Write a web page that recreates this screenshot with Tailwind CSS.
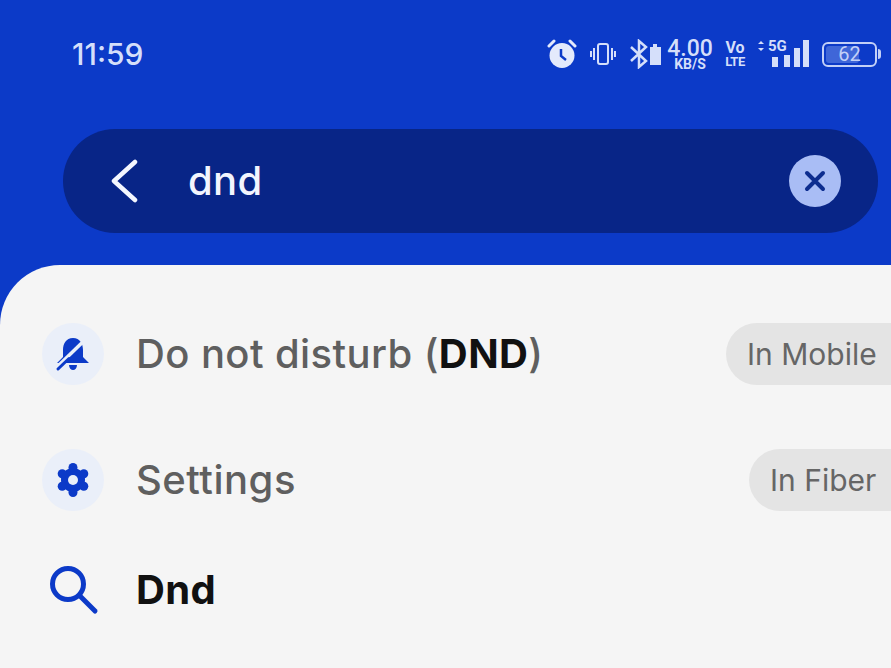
<!DOCTYPE html>
<html lang="en">
<head>
  <meta charset="UTF-8" />
  <meta name="viewport" content="width=device-width, initial-scale=1.0" />
  <title>Search</title>
  <script src="https://cdn.jsdelivr.net/npm/@tailwindcss/browser@4"></script>
</head>
<body class="bg-[#0c3ac8] font-['Inter',sans-serif] overflow-hidden">
<div class="w-[891px] h-[668px] flex flex-col overflow-hidden">

  <!-- status bar -->
  <div class="h-[129px] pl-[72px] pr-[10px] pb-[21px] flex items-center justify-between text-[#d5dffa] shrink-0">
    <span class="text-[30px] leading-none font-medium">11:59</span>
    <div class="flex items-center font-['Roboto',sans-serif]">
      <svg class="w-[30px] h-[30px]" viewBox="0 0 30 30">
        <circle cx="15" cy="16.500" r="12.500" fill="#e4eafc"/>
        <path d="M14 10v7l5 4" fill="none" stroke="#0c3ac8" stroke-width="2.500"/>
        <path d="M2 7l5-5M28 7l-5-5" stroke="#e4eafc" stroke-width="3" stroke-linecap="round"/>
      </svg>
      <svg class="w-[26px] h-[26px] ml-[13px]" viewBox="0 0 26 26" fill="none" stroke="#d5dffa" stroke-width="2">
        <rect x="8" y="3" width="10" height="20" rx="2"/>
        <path d="M4 7v12M22 7v12M1 10v6M25 10v6"/>
      </svg>
      <svg class="w-[32px] h-[30px] ml-[14px]" viewBox="0 0 32 30" fill="none">
        <path d="M1 8l15 14-7 6V2l7 6L1 22" stroke="#d5dffa" stroke-width="2.500"/>
        <path d="M20 8h3V5h4v3h4v18H20z" fill="#d5dffa"/>
      </svg>
      <div class="ml-[5px] w-[46px] flex flex-col items-center leading-none">
        <span class="text-[23px] leading-[19px] font-medium">4.00</span>
        <span class="text-[14px] leading-[12px] font-bold">KB/S</span>
      </div>
      <div class="ml-[12px] w-[20px] flex flex-col items-center font-bold">
        <span class="text-[16px] leading-[14px]">Vo</span>
        <span class="text-[13px] leading-[13px] tracking-[-0.5px]">LTE</span>
      </div>
      <div class="ml-[12px] w-[53px] h-[30px] relative">
        <span class="absolute left-[11px] top-[0px] text-[15px] font-bold leading-[14px]">5G</span>
        <svg class="absolute inset-0 w-[53px] h-[30px]" viewBox="0 0 53 30" fill="#d5dffa">
          <path d="M1 5l3-3 3 3zM1 9l3 3 3-3z"/>
          <rect x="15" y="18" width="6" height="10"/>
          <rect x="27" y="16" width="6" height="12"/>
          <rect x="37" y="9" width="6" height="19"/>
          <rect x="46" y="1" width="6" height="27"/>
        </svg>
      </div>
      <div class="ml-[12px] w-[55px] h-[25px] rounded-[6px] border-2 border-[#c3d0f7] p-[2px] relative">
        <div class="h-full w-[33px] bg-[#3f66d8] rounded-[3px]"></div>
        <span class="absolute inset-0 flex items-center justify-center text-[20px] leading-none text-[#c3d0f7]">62</span>
      </div>
      <div class="w-[3px] h-[10px] ml-[1px] rounded-r-[3px] bg-[#c3d0f7]"></div>
    </div>
  </div>

  <!-- search pill -->
  <div class="h-[104px] ml-[63px] w-[815px] rounded-full bg-[#082587] flex items-center shrink-0 pl-[47px] pr-[37px]">
    <svg class="w-[28px] h-[44px]" viewBox="0 0 28 44" fill="none">
      <path d="M25 3L4 22l21 19" stroke="#f4f7ff" stroke-width="4.500" stroke-linecap="round" stroke-linejoin="round"/>
    </svg>
    <span class="ml-[50px] text-[40px] leading-none text-[#f2f5fe] font-medium tracking-[0.3px]">dnd</span>
    <div class="ml-auto w-[52px] h-[52px] rounded-full bg-[#a9bdf5] flex items-center justify-center">
      <svg class="w-[24px] h-[24px]" viewBox="0 0 24 24" fill="none">
        <path d="M4 4l16 16M20 4L4 20" stroke="#0d2d8f" stroke-width="4" stroke-linecap="round"/>
      </svg>
    </div>
  </div>

  <!-- results panel -->
  <div class="mt-[32px] flex-1 bg-[#f5f5f5] rounded-tl-[60px] pl-[42px] pt-[58px]">
    <div class="flex items-center h-[62px]">
      <div class="w-[62px] h-[62px] rounded-full bg-[#eaeff9] flex items-center justify-center shrink-0">
        <svg class="w-[36px] h-[36px]" viewBox="0 0 36 36" fill="#0c3ac8">
          <path d="M18 2c-7 0-10 6-10 12v7l-6 6h32l-6-6v-7c0-6-3-12-10-12z"/>
          <path d="M14 29h8c0 3-2 5-4 5s-4-2-4-5z"/>
          <path d="M34 0L3 30" stroke="#eaeff9" stroke-width="3.500"/>
          <path d="M3 33L14 22.500" stroke="#0c3ac8" stroke-width="3" stroke-linecap="round"/>
        </svg>
      </div>
      <span class="ml-[32px] text-[40px] leading-none font-medium text-[#5f5f5f] tracking-[0.4px] whitespace-nowrap">Do not disturb (<b class="font-bold text-[#111111]">DND</b>)</span>
      <div class="ml-auto w-[165px] h-[62px] rounded-l-full bg-[#e4e4e4] pl-[21px] flex items-center text-[30px] text-[#666666] shrink-0 whitespace-nowrap overflow-hidden">In Mobile</div>
    </div>
    <div class="flex items-center h-[62px] mt-[64px]">
      <div class="w-[62px] h-[62px] rounded-full bg-[#eaeff9] flex items-center justify-center shrink-0">
        <svg class="w-[36px] h-[36px]" viewBox="0 0 36 36" fill="#0c3ac8">
          <circle cx="18" cy="18" r="12"/>
          <circle cx="18" cy="5.500" r="4.500"/>
          <circle cx="18" cy="30.500" r="4.500"/>
          <circle cx="7.200" cy="11.750" r="4.500"/>
          <circle cx="28.800" cy="11.750" r="4.500"/>
          <circle cx="7.200" cy="24.250" r="4.500"/>
          <circle cx="28.800" cy="24.250" r="4.500"/>
          <circle cx="18" cy="18" r="5" fill="#eaeff9"/>
        </svg>
      </div>
      <span class="ml-[32px] text-[40px] leading-none font-medium text-[#5f5f5f] tracking-[0.5px]">Settings</span>
      <div class="ml-auto w-[142px] h-[62px] rounded-l-full bg-[#e4e4e4] pl-[21px] flex items-center text-[30px] text-[#666666] shrink-0 whitespace-nowrap overflow-hidden">In Fiber</div>
    </div>
    <div class="flex items-center h-[62px] mt-[48px]">
      <div class="w-[62px] h-[62px] flex items-center justify-center shrink-0">
        <svg class="w-[52px] h-[52px]" viewBox="0 0 52 52" fill="none" stroke="#0c3ac8" stroke-width="5" stroke-linecap="round">
          <circle cx="21" cy="20" r="15.500"/>
          <path d="M33 32l15 15"/>
        </svg>
      </div>
      <span class="ml-[32px] text-[40px] leading-none font-bold text-[#111111] tracking-[0.3px]">Dnd</span>
    </div>
  </div>
</div>
</body>
</html>
